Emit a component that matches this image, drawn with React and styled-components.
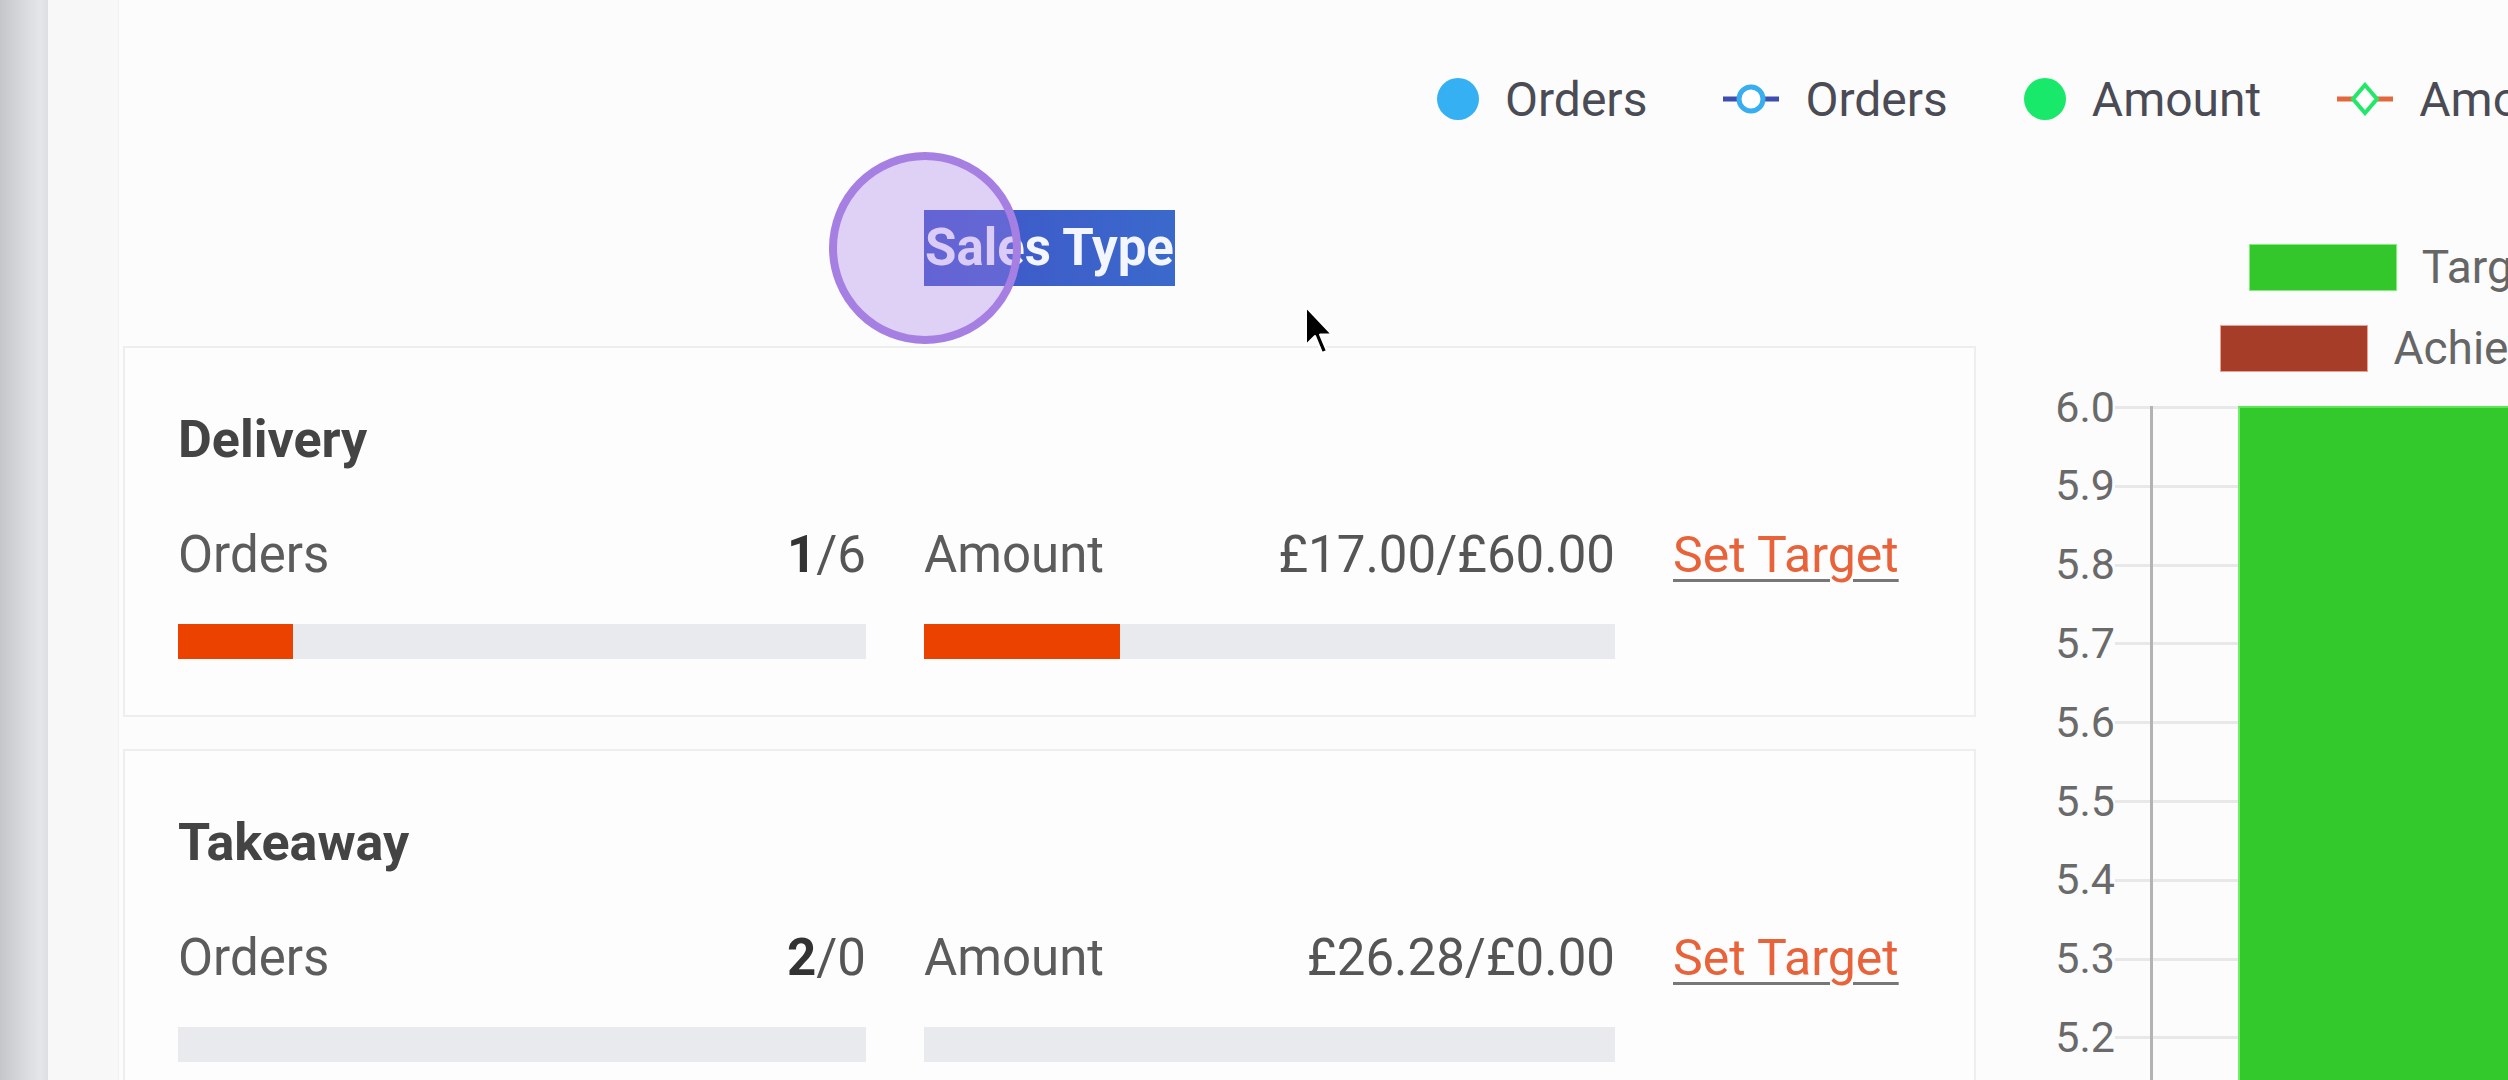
import React from "react";
import styled, { createGlobalStyle } from "styled-components";

const GlobalStyle = createGlobalStyle`
  html, body {
    margin: 0;
    padding: 0;
    background: #fcfcfc;
    overflow: hidden;
  }
  body {
    font-family: Roboto, "Liberation Sans", Arial, sans-serif;
  }
`;

const Page = styled.div`
  display: flex;
  width: 2508px;
  height: 1080px;
  overflow: hidden;
  position: relative;
  background: #fcfcfc;
`;

const SideStrip = styled.div`
  flex: 0 0 48px;
  background: linear-gradient(to right, #c4c6c9 0%, #d6d8db 45%, #e4e6e9 85%, #dcdee1 100%);
`;

const Gutter = styled.div`
  flex: 0 0 70px;
  background: #f8f8f8;
  border-right: 1px solid #f2f2f2;
`;

const Main = styled.div`
  flex: 1;
  display: flex;
  flex-direction: column;
  padding-left: 4px;
  min-width: 0;
`;

const LegendRow = styled.div`
  flex: 0 0 198px;
  display: flex;
  align-items: center;
  padding-left: 1314px;
  white-space: nowrap;
`;

const LegendItem = styled.div`
  display: flex;
  align-items: center;
  gap: 26px;
  margin-right: 76px;
  font-size: 48px;
  color: #4b4b55;
`;

const Dot = styled.span`
  width: 42px;
  height: 42px;
  border-radius: 50%;
  background: ${(p) => p.color};
  flex: 0 0 auto;
`;

const Content = styled.div`
  display: flex;
  flex: 0 0 auto;
`;

const LeftCol = styled.div`
  flex: 0 0 1853px;
  display: flex;
  flex-direction: column;
`;

const HeadingWrap = styled.div`
  flex: 0 0 auto;
  display: flex;
  justify-content: center;
  padding: 12px 0 60px;
`;

const Heading = styled.h2`
  margin: 0;
  font-size: 51px;
  font-weight: 700;
  line-height: 76px;
  padding: 0 1px;
  color: #f4f6ff;
  background: linear-gradient(to right, #4055c9, #3a69cb);
`;

const Card = styled.div`
  flex: 0 0 371px;
  box-sizing: border-box;
  height: 371px;
  margin-bottom: 32px;
  border: 2px solid #eeeeee;
  background: #fdfdfd;
  padding: 61px 70px 0 53px;
`;

const CardTitle = styled.div`
  font-size: 52px;
  font-weight: 700;
  line-height: 62px;
  color: #444;
  margin-bottom: 53px;
`;

const Metrics = styled.div`
  display: grid;
  grid-template-columns: 688px 691px auto;
  column-gap: 58px;
  row-gap: 38px;
`;

const MetricHead = styled.div`
  display: flex;
  justify-content: space-between;
  font-size: 51px;
  line-height: 62px;
  white-space: nowrap;
`;

const Label = styled.span`
  color: #5c5c5c;
`;

const Value = styled.span`
  color: #555;
  b {
    color: #333;
    font-weight: 700;
  }
`;

const TargetLink = styled.a`
  font-size: 50px;
  line-height: 62px;
  color: #e8623a;
  text-decoration: underline;
  text-decoration-color: #777;
  text-underline-offset: 7px;
  text-decoration-thickness: 3px;
  white-space: nowrap;
  cursor: pointer;
`;

const Track = styled.div`
  height: 35px;
  background: #e8eaed;
`;

const Fill = styled.div`
  height: 100%;
  background: #ec4200;
`;

const ChartCol = styled.div`
  flex: 0 0 850px;
  display: flex;
  flex-direction: column;
  padding-top: 47px;
  height: 835px;
`;

const ChartLegend = styled.div`
  display: flex;
  flex-direction: column;
  align-items: center;
  gap: 36px;
  margin-bottom: 36px;
`;

const ChartLegendItem = styled.div`
  display: flex;
  align-items: center;
  gap: 26px;
  font-size: 46px;
  line-height: 45px;
  color: #666;
  white-space: nowrap;
`;

const Swatch = styled.span`
  width: 146px;
  height: 45px;
  background: ${(p) => p.color};
  box-shadow: 0 0 0 1px ${(p) => p.edge};
`;

const Plot = styled.div`
  display: flex;
  flex: 1;
`;

const YLabels = styled.div`
  flex: 0 0 139px;
  display: flex;
  flex-direction: column;
  margin-top: -39.4px;
`;

const YLabel = styled.div`
  height: 78.8px;
  line-height: 78.8px;
  text-align: right;
  font-size: 43px;
  color: #6a6a6a;
`;

const Grid = styled.div`
  flex: 1;
  display: flex;
  background: repeating-linear-gradient(
    to bottom,
    #e8e8e8 0px,
    #e8e8e8 3px,
    transparent 3px,
    transparent 78.8px
  );
  margin-top: -1px;
`;

const Ticks = styled.div`
  flex: 0 0 35px;
`;

const AxisArea = styled.div`
  flex: 1;
  display: flex;
  border-left: 3px solid #b3b3b3;
  padding-left: 85px;
`;

const Bar = styled.div`
  flex: 1;
  background: #33c82b;
  border-left: 2px solid #6fee66;
  border-top: 2px solid #5be653;
`;

const TouchRing = styled.div`
  position: absolute;
  left: 829px;
  top: 152px;
  width: 176px;
  height: 176px;
  border-radius: 50%;
  border: 8px solid #a67fe3;
  background: rgba(170, 125, 232, 0.35);
  pointer-events: none;
`;

const Cursor = styled.svg`
  position: absolute;
  left: 1304px;
  top: 305px;
  pointer-events: none;
`;

const LineMarker = ({ line, ring, diamond }) => (
  <svg width="56" height="34" viewBox="0 0 56 34">
    <line x1="0" y1="17" x2="56" y2="17" stroke={line} strokeWidth="5" />
    {diamond ? (
      <polygon points="28,3 40,17 28,31 16,17" fill="#fff" stroke={ring} strokeWidth="4" />
    ) : (
      <circle cx="28" cy="17" r="12" fill="#fff" stroke={ring} strokeWidth="5" />
    )}
  </svg>
);

const cards = [
  { title: "Delivery", done: 1, target: 6, amount: "£17.00/£60.00", amtPct: 28.3 },
  { title: "Takeaway", done: 2, target: 0, amount: "£26.28/£0.00", amtPct: 0 },
];

const ticks = ["6.0", "5.9", "5.8", "5.7", "5.6", "5.5", "5.4", "5.3", "5.2", "5.1"];

const App = () => {
  return (
    <>
      <GlobalStyle />
      <Page>
        <SideStrip />
        <Gutter />
        <Main>
          <LegendRow>
            <LegendItem>
              <Dot color="#35b0f2" />
              Orders
            </LegendItem>
            <LegendItem>
              <LineMarker line="#3d4fae" ring="#38aef0" />
              Orders
            </LegendItem>
            <LegendItem>
              <Dot color="#19e96a" />
              Amount
            </LegendItem>
            <LegendItem>
              <LineMarker line="#e2683e" ring="#22e86a" diamond />
              Amount
            </LegendItem>
          </LegendRow>
          <Content>
            <LeftCol>
              <HeadingWrap>
                <Heading>Sales Type</Heading>
              </HeadingWrap>
              {cards.map((c) => {
                const ordPct = c.target ? Math.min(100, (c.done / c.target) * 100) : 0;
                return (
                  <Card key={c.title}>
                    <CardTitle>{c.title}</CardTitle>
                    <Metrics>
                      <MetricHead>
                        <Label>Orders</Label>
                        <Value>
                          <b>{c.done}</b>/{c.target}
                        </Value>
                      </MetricHead>
                      <MetricHead>
                        <Label>Amount</Label>
                        <Value>{c.amount}</Value>
                      </MetricHead>
                      <TargetLink>Set Target</TargetLink>
                      <Track>
                        <Fill style={{ width: `${ordPct}%` }} />
                      </Track>
                      <Track>
                        <Fill style={{ width: `${c.amtPct}%` }} />
                      </Track>
                    </Metrics>
                  </Card>
                );
              })}
            </LeftCol>
            <ChartCol>
              <ChartLegend>
                <ChartLegendItem>
                  <Swatch color="#33c72b" edge="#7ff078" />
                  Target
                </ChartLegendItem>
                <ChartLegendItem>
                  <Swatch color="#a53d28" edge="#f0a090" />
                  Achieved
                </ChartLegendItem>
              </ChartLegend>
              <Plot>
                <YLabels>
                  {ticks.map((t) => (
                    <YLabel key={t}>{t}</YLabel>
                  ))}
                </YLabels>
                <Grid>
                  <Ticks />
                  <AxisArea>
                    <Bar />
                  </AxisArea>
                </Grid>
              </Plot>
            </ChartCol>
          </Content>
        </Main>
        <TouchRing />
        <Cursor width="30" height="58" viewBox="0 0 15 29">
          <path
            d="M1 1 L1 20 L5.5 15.5 L9 24 L11.5 23 L8 14.8 L14 14.8 Z"
            fill="#000"
            stroke="#fff"
            strokeWidth="1"
            strokeLinejoin="round"
          />
        </Cursor>
      </Page>
    </>
  );
};

export default App;
